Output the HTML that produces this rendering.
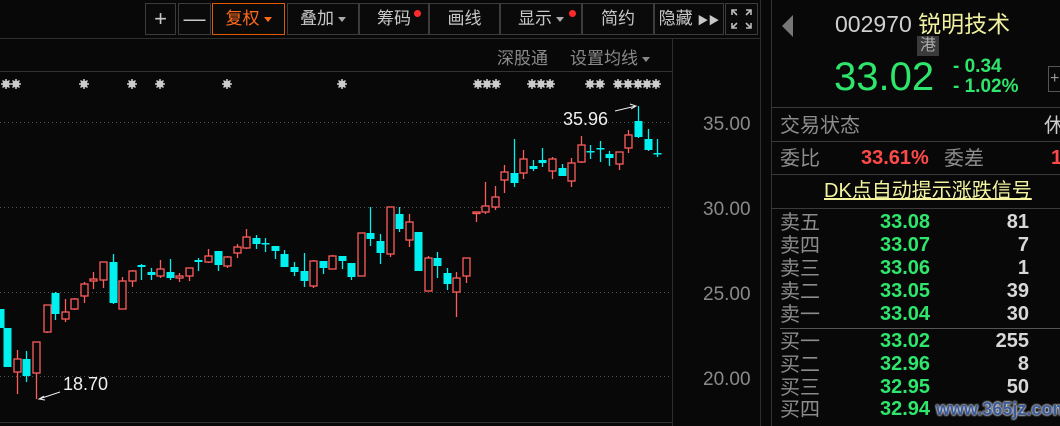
<!DOCTYPE html>
<html><head><meta charset="utf-8"><style>
*{margin:0;padding:0;box-sizing:border-box}
body{width:1060px;height:426px;background:#080808;overflow:hidden;position:relative;font-family:"Liberation Sans","Noto Sans CJK SC",sans-serif;}
.a{position:absolute;white-space:nowrap}
.btn{position:absolute;top:3px;height:32px;border:1px solid #3c3c3c;background:#0a0a0a;color:#c8c8c8;font-size:17px;line-height:30px;text-align:center}
.dot{position:absolute;width:7px;height:7px;border-radius:50%;background:#ff2a2a;top:6px}
.tri{display:inline-block;width:0;height:0;border-left:4px solid transparent;border-right:4px solid transparent;border-top:5px solid #aaa;vertical-align:middle;margin-left:4px}
.hl{position:absolute;height:1px;background:#3a3a3a}
.lab{color:#8c8c8c;font-size:20px;line-height:22px;margin-top:1px}
.g{color:#2ee66b;font-weight:bold;font-size:20px}
.v{color:#d8d8d8;font-weight:bold;font-size:20px;text-align:right;width:60px}
.ax{color:#8a8a8a;font-size:19px;left:703px}
</style></head><body>

<svg class="a" style="left:0;top:0" width="1060" height="426">
<g stroke="#555" stroke-dasharray="1 3">
<line x1="0" y1="122.5" x2="672" y2="122.5"/><line x1="0" y1="207.5" x2="672" y2="207.5"/><line x1="0" y1="292.5" x2="672" y2="292.5"/><line x1="0" y1="376.5" x2="672" y2="376.5"/>
</g>
<line x1="0" y1="38.5" x2="760" y2="38.5" stroke="#2e2e2e"/>
<line x1="0" y1="71.5" x2="672" y2="71.5" stroke="#333"/>
<line x1="672.5" y1="38" x2="672.5" y2="426" stroke="#2e2e2e"/>
<line x1="760.5" y1="0" x2="760.5" y2="426" stroke="#2e2e2e"/>
<line x1="771.5" y1="0" x2="771.5" y2="426" stroke="#333"/>
<line x1="0" y1="422.5" x2="672" y2="422.5" stroke="#333"/>
<defs><g id="s"><circle r="3.5" fill="#ccc"/><path d="M-5 0H5M0-5V5M-3.5-3.5L3.5 3.5M-3.5 3.5L3.5-3.5" stroke="#ccc" stroke-width="1.5"/></g></defs>
<g transform="translate(0,84)">
<use href="#s" x="6"/><use href="#s" x="16"/><use href="#s" x="84"/><use href="#s" x="132"/><use href="#s" x="160"/><use href="#s" x="227"/><use href="#s" x="342"/>
<use href="#s" x="478"/><use href="#s" x="487"/><use href="#s" x="496"/><use href="#s" x="532"/><use href="#s" x="541"/><use href="#s" x="550"/>
<use href="#s" x="590"/><use href="#s" x="600"/><use href="#s" x="618"/><use href="#s" x="628"/><use href="#s" x="638"/><use href="#s" x="647"/><use href="#s" x="656"/>
</g>
<g id="c" stroke-width="1.3"></g>
<text x="563" y="125" fill="#f0f0f0" font-size="18" font-family="Liberation Sans">35.96</text>
<path d="M615 111L636 106M630 104L636 106L631 109" stroke="#eee" fill="none"/>
<text x="63" y="390" fill="#f0f0f0" font-size="18" font-family="Liberation Sans">18.70</text>
<path d="M60 392L39 399M44 396L39 399L45 400" stroke="#eee" fill="none"/>
</svg>

<div class="btn" style="left:145px;width:31px;font-size:22px">+</div>
<div class="btn" style="left:178px;width:33px;font-size:22px">—</div>
<div class="btn" style="left:212px;width:73px;border-color:#e05a00;color:#ff6a1a">复权<span class="tri" style="border-top-color:#ff6a1a"></span></div>
<div class="btn" style="left:287px;width:72px">叠加<span class="tri"></span></div>
<div class="btn" style="left:359px;width:70px">筹码<span class="dot" style="left:54px"></span></div>
<div class="btn" style="left:429px;width:71px">画线</div>
<div class="btn" style="left:500px;width:82px">显示<span class="tri"></span><span class="dot" style="left:68px"></span></div>
<div class="btn" style="left:582px;width:72px">简约</div>
<div class="btn" style="left:654px;width:70px;font-size:17px">隐藏 <span style="font-size:11px">▶▶</span></div>
<div class="btn" style="left:725px;width:33px">
<svg width="31" height="30"><path d="M6 11V6H11M6 6L11 11M20 6H25V11M25 6L20 11M6 19V24H11M6 24L11 19M25 19V24H20M25 24L20 19" stroke="#bbb" stroke-width="1.6" fill="none"/></svg></div>

<div class="a" style="left:497px;top:44px;color:#8a8a8a;font-size:17px">深股通</div>
<div class="a" style="left:570px;top:44px;color:#8a8a8a;font-size:17px">设置均线<span class="tri" style="border-top-color:#888"></span></div>

<div class="a ax" style="top:114px">35.00</div>
<div class="a ax" style="top:199px">30.00</div>
<div class="a ax" style="top:284px">25.00</div>
<div class="a ax" style="top:369px">20.00</div>

<div class="a" style="left:782px;top:15px;width:0;height:0;border-top:11px solid transparent;border-bottom:11px solid transparent;border-right:11px solid #777"></div>
<div class="a" style="left:835px;top:5px;font-size:23px;color:#d0d0d0">002970 <span style="color:#f0f0a0">锐明技术</span></div>
<div class="a" style="left:917px;top:36px;width:22px;height:20px;background:#3a3a3a;color:#aaa;font-size:16px;line-height:20px;text-align:center">港</div>
<div class="a" style="left:834px;top:55px;font-size:40px;color:#2ee66b">33.02</div>
<div class="a" style="left:953px;top:57px;font-size:19px;color:#2ee66b;font-weight:bold;line-height:20px">- 0.34<br>- 1.02%</div>
<div class="a" style="left:1048px;top:66px;width:14px;height:26px;border:1px solid #555;color:#999;font-size:16px;line-height:24px;padding-left:1px">+</div>
<div class="hl" style="left:771px;width:289px;top:107px"></div>
<div class="a lab" style="left:780px;top:114px">交易状态</div>
<div class="a lab" style="left:1044px;top:114px;color:#ccc">休</div>
<div class="hl" style="left:771px;width:289px;top:141px"></div>
<div class="a lab" style="left:780px;top:147px">委比</div>
<div class="a" style="left:861px;top:147px;font-size:20px;font-weight:bold;color:#ff4a4a">33.61%</div>
<div class="a lab" style="left:944px;top:147px">委差</div>
<div class="a" style="left:1051px;top:147px;font-size:20px;font-weight:bold;color:#ff4a4a">1</div>
<div class="hl" style="left:771px;width:289px;top:174px"></div>
<div class="a" style="left:824px;top:178px;font-size:20px;line-height:26px;color:#f4f4a0;text-decoration:underline">DK点自动提示涨跌信号</div>
<div class="hl" style="left:771px;width:289px;top:208px"></div>

<div class="a lab" style="left:780px;top:211px">卖五</div><div class="a g" style="left:880px;top:211px">33.08</div><div class="a v" style="left:969px;top:211px">81</div>
<div class="a lab" style="left:780px;top:234px">卖四</div><div class="a g" style="left:880px;top:234px">33.07</div><div class="a v" style="left:969px;top:234px">7</div>
<div class="a lab" style="left:780px;top:257px">卖三</div><div class="a g" style="left:880px;top:257px">33.06</div><div class="a v" style="left:969px;top:257px">1</div>
<div class="a lab" style="left:780px;top:280px">卖二</div><div class="a g" style="left:880px;top:280px">33.05</div><div class="a v" style="left:969px;top:280px">39</div>
<div class="a lab" style="left:780px;top:303px">卖一</div><div class="a g" style="left:880px;top:303px">33.04</div><div class="a v" style="left:969px;top:303px">30</div>
<div class="hl" style="left:780px;width:280px;top:328px;background:#555"></div>
<div class="a lab" style="left:780px;top:330px">买一</div><div class="a g" style="left:880px;top:330px">33.02</div><div class="a v" style="left:969px;top:330px">255</div>
<div class="a lab" style="left:780px;top:353px">买二</div><div class="a g" style="left:880px;top:353px">32.96</div><div class="a v" style="left:969px;top:353px">8</div>
<div class="a lab" style="left:780px;top:376px">买三</div><div class="a g" style="left:880px;top:376px">32.95</div><div class="a v" style="left:969px;top:376px">50</div>
<div class="a lab" style="left:780px;top:398px">买四</div><div class="a g" style="left:880px;top:398px">32.94</div>
<div class="a" style="left:936px;top:399px;font-size:18px;font-weight:bold;color:#3a5a9a;text-shadow:0 0 2px #fff,0 0 2px #fff">www.365jz.com</div>

<script>
var d=[[0,309,328,309,328,0],[7,328,367,328,367,0],[17,359,372,350,394,1],[26,359,376,351,382,0],[36,342,373,342,399,1],[47,305,332,305,333,1],[55,293,314,292,320,0],[65,312,319,299,322,1],[74,299,309,298,310,1],[84,284,296,282,303,1],[93,279,281,272,289,1],[103,262,280,262,288,1],[113,262,303,254,304,0],[122,281,309,277,309,1],[132,271,281,270,287,1],[141,265,267,264,280,0],[151,272,275,268,280,0],[160,269,276,260,278,1],[170,272,278,259,280,0],[179,276,278,273,282,1],[189,268,276,268,281,1],[198,260,262,258,271,0],[208,256,262,249,263,1],[218,251,265,251,271,0],[227,257,266,256,268,1],[237,247,253,244,258,1],[246,237,248,229,249,1],[256,238,244,235,249,0],[265,243,244,238,252,0],[275,246,251,246,259,0],[284,254,267,250,267,0],[294,267,272,262,276,0],[304,271,281,253,287,0],[313,261,286,260,288,1],[323,261,268,261,274,0],[332,256,269,255,269,1],[342,256,261,256,269,0],[351,263,277,263,280,0],[361,233,276,233,276,1],[370,233,239,207,246,0],[380,241,253,234,264,0],[390,207,254,207,257,1],[399,214,229,207,232,0],[409,222,240,214,247,1],[418,232,271,232,271,0],[428,258,291,256,291,1],[437,258,266,252,278,0],[447,273,284,268,290,0],[456,278,292,272,317,1],[466,258,276,258,283,1],[476,212,213,212,222,1],[485,206,212,182,214,1],[495,197,207,186,210,1],[504,172,180,165,193,1],[514,173,183,139,187,0],[523,159,173,150,179,1],[533,166,169,160,171,0],[542,160,163,148,167,0],[552,159,171,157,179,1],[562,168,176,164,176,0],[571,163,181,158,187,1],[581,145,162,136,163,1],[590,151,152,145,159,0],[600,148,149,141,162,0],[609,154,158,151,166,0],[619,152,164,152,170,1],[628,135,148,130,153,1],[638,121,137,106,138,0],[648,139,150,129,151,0],[657,153,154,139,157,0]];
var s='',R='#ff5c5c',C='#00f0f0';
d.forEach(function(k){var x=k[0],c=k[5]?R:C;s+='<line x1="'+(x+.5)+'" y1="'+k[3]+'" x2="'+(x+.5)+'" y2="'+k[4]+'" stroke="'+c+'"/>';var h=Math.max(k[2]-k[1],1.5);
if(k[5])s+='<rect x="'+(x-3)+'" y="'+k[1]+'" width="7" height="'+h+'" fill="#080808" stroke="'+c+'"/>';else s+='<rect x="'+(x-3.5)+'" y="'+k[1]+'" width="8" height="'+h+'" fill="'+c+'"/>';});
document.getElementById('c').innerHTML=s;
</script>
</body></html>
